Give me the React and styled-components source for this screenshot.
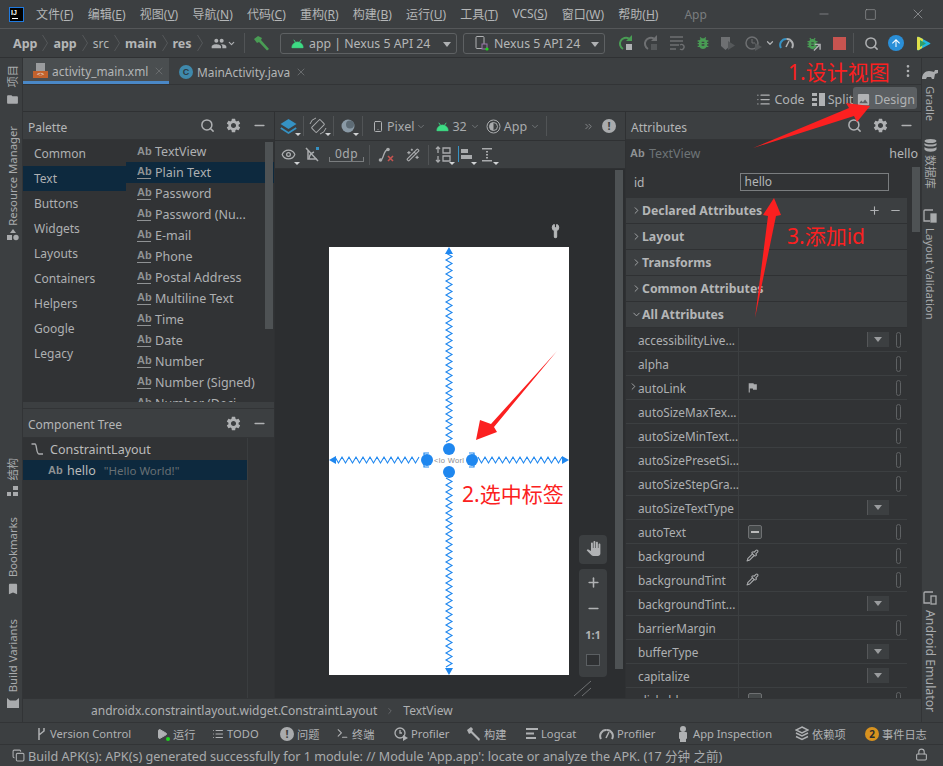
import React from "react";
import styled, { createGlobalStyle } from "styled-components";
import { Search, Plus, Minus, ChevronRight, ChevronDown, X, Wrench, Pipette, Lock, Eye, Square, MoreVertical, Smartphone, ChevronsRight, Wand2, List, Terminal, Play, Copy } from "lucide-react";
import { MdSettings, MdBugReport, MdPanTool, MdFlag, MdBookmark, MdFolder, MdArrowUpward, MdImage, MdPeople } from "react-icons/md";

const Global = createGlobalStyle`
  html, body { margin: 0; padding: 0; background: #3c3f41; }
  * { box-sizing: border-box; }
  body { font-family: "Noto Sans", "Noto Sans CJK SC", sans-serif; font-size: 12px; color: #bbbbbb; }
`;

const Window = styled.div`position: relative; width: 943px; height: 766px; overflow: hidden; display: flex; flex-direction: column; background: #3c3f41;`;

/* title bar */
const TitleBar = styled.header`height: 29px; flex: none; display: flex; align-items: center; padding-left: 9px; border-bottom: 1px solid #555759;`;
const Logo = styled.div`width: 15px; height: 15px; background: #000; border: 1px solid #1f7ae0; color: #fff; font: 700 7px/9px "Liberation Sans", sans-serif; padding-left: 1px; margin-right: 12px; position: relative;
  &::after { content: ""; position: absolute; left: 2px; bottom: 2px; width: 6px; height: 1px; background: #fff; }`;
const MenuBar = styled.nav`display: flex; gap: 14.2px; font-size: 12px; color: #b4b6b7; white-space: nowrap;`;
const Mnemonic = styled.span`text-decoration: underline; text-underline-offset: 1px;`;
const WindowTitle = styled.span`margin-left: 26px; color: #7a7d7f; font-size: 12px;`;
const WinControls = styled.div`margin-left: auto; display: flex; align-items: center; gap: 33px; padding-right: 17px; color: #a9abad;`;

/* main toolbar */
const ToolBar = styled.div`height: 29px; flex: none; display: flex; align-items: center; padding-left: 13px; border-bottom: 1px solid #2f3133;`;
const Crumbs = styled.div`width: 198px; flex: none; display: flex; align-items: center; gap: 5px; white-space: nowrap;`;
const Crumb = styled.span`font-weight: ${p => (p.$b ? 700 : 400)}; font-size: ${p => (p.$b ? 12.5 : 12)}px; color: #b4b6b7;`;
const CrumbSep = styled.svg`width: 6px; height: 18px; flex: none;`;
const ToolIcon = styled.span`display: inline-flex; position: relative; align-items: center; justify-content: center; flex: none; margin-left: ${p => p.$ml || 0}px; width: ${p => p.$w || 16}px; height: 18px; color: ${p => p.$c || "#afb1b3"};
  ${p => (p.$caret ? `&::after { content: ""; position: absolute; right: -4px; bottom: -1px; border-left: 3px solid transparent; border-right: 3px solid transparent; border-top: 3px solid #d0d2d4; }` : "")}`;
const VDivider = styled.span`flex: none; width: 1px; height: ${p => p.$h || 20}px; background: #515456; margin-left: ${p => p.$ml || 0}px;`;
const RunBox = styled.div`flex: none; display: flex; align-items: center; width: ${p => p.$w}px; height: 21px; margin-left: ${p => p.$ml}px; border: 1px solid #5e6163; border-radius: 3px; padding-left: ${p => p.$pl}px; gap: 5px; color: #b4b6b7; font-size: 12.3px; white-space: nowrap; position: relative;`;
const Caret = styled.span`position: absolute; right: ${p => p.$r}px; top: 8px; width: 0; height: 0; border-left: 4px solid transparent; border-right: 4px solid transparent; border-top: 5px solid #afb1b3;`;

/* body */
const Main = styled.div`flex: 1; min-height: 0; display: flex;`;
const Strip = styled.aside`flex: none; width: ${p => p.$w}px; display: flex; flex-direction: column; align-items: center; background: #3c3f41; ${p => (p.$left ? "border-right: 1px solid #323436; padding-left: 3px;" : "border-left: 1px solid #323436; padding-right: 5px;")}`;
const StripItem = styled.div`display: flex; flex-direction: column; align-items: center; gap: ${p => p.$gap || 5}px; margin-top: ${p => p.$mt || 0}px; color: #a9abad;`;
const StripSpacer = styled.div`flex: 1;`;
const StripLabel = styled.span`writing-mode: vertical-rl; text-orientation: sideways; font-size: ${p => p.$fs || 11.3}px; line-height: 14px; white-space: nowrap; ${p => (p.$left ? "transform: rotate(180deg);" : "")}`;
const Center = styled.div`flex: 1; min-width: 0; display: flex; flex-direction: column;`;

const TabRow = styled.div`height: 27px; flex: none; display: flex; align-items: stretch; border-bottom: 1px solid #323436; position: relative;`;
const Tab = styled.div`display: flex; align-items: center; width: ${p => p.$w}px; padding-left: 10px; padding-top: 2px; gap: 4px; font-size: 11.9px; color: #b4b6b7; white-space: nowrap; ${p => (p.$active ? "background: #4a4e50; border-bottom: 3px solid #4a88c7;" : "")}`;
const TabClose = styled.span`display: inline-flex; margin-left: ${p => p.$ml}px; color: #686b6d;`;
const TabMenu = styled.span`margin-left: auto; display: flex; align-items: center; padding-right: 5px; color: #afb1b3;`;
const FileIcon = styled.span`width: 15px; height: 16px; flex: none; position: relative; display: block;
  &::before { content: ""; position: absolute; left: 3px; top: 0; width: 9px; height: 8px; background: #9a9c9e; }
  &::after { content: "<>"; position: absolute; left: 0; top: 8px; width: 15px; height: 7px; background: #c1622d; color: #eee; font: 6px/7px "Liberation Sans", sans-serif; text-align: center; }`;
const ClassIcon = styled.span`width: 14px; height: 14px; flex: none; border-radius: 50%; background: #3f89ac; color: #2d3a42; font: 700 9px/14px "Liberation Sans", sans-serif; text-align: center;`;

const ViewBar = styled.div`height: 27px; flex: none; display: flex; align-items: center; justify-content: flex-end; padding-right: 4px; border-bottom: 1px solid #2f3133; font-size: 12.5px; color: #b0b2b4;`;
const ViewItem = styled.div`display: flex; align-items: center; gap: 3px; height: 22px; padding: 2px ${p => (p.$active ? 2 : 0)}px 0 3px; margin-left: ${p => p.$ml || 0}px; border-radius: 3px; ${p => (p.$active ? "background: #5b5f62;" : "")}`;

const Panels = styled.div`flex: 1; min-height: 0; display: flex;`;
const LeftColumn = styled.section`flex: none; width: 252px; display: flex; flex-direction: column; border-right: 1px solid #2f3133;`;
const PanelHeader = styled.div`height: ${p => p.$h || 28}px; flex: none; display: flex; align-items: center; padding-left: 5px; font-size: 12px; color: #b4b6b7; border-bottom: 1px solid #323436; background: #3c3f41;`;
const PanelTitle = styled.span`margin-top: 3px;`;
const HeaderIcons = styled.div`margin-left: auto; display: flex; align-items: center; gap: 10px; padding-right: ${p => p.$pr}px; color: #afb1b3;`;
const PaletteBody = styled.div`height: 262px; flex: none; display: flex; overflow: hidden; background: #313335; position: relative;`;
const Categories = styled.ul`width: 103px; flex: none; margin: 0; padding: 1px 0 0; list-style: none;`;
const Category = styled.li`height: 25px; line-height: 25px; padding-left: 11px; color: #aeb0b2; ${p => (p.$sel ? "background: #0d293e;" : "")}`;
const Widgets = styled.ul`flex: 1; margin: 0; padding: 1px 0 0; list-style: none;`;
const WidgetItem = styled.li`height: 21px; display: flex; align-items: center; gap: 4px; padding-left: 11px; white-space: nowrap; color: #aeb0b2; font-size: 12.5px; ${p => (p.$sel ? "background: #0d293e;" : "")}`;
const AbMark = styled.span`width: 14px; flex: none; font: 700 11px/11px "Liberation Sans", sans-serif; color: #8f9294; ${p => (p.$bar ? "border-bottom: 1px solid #8f9294; padding-bottom: 1px; margin-top: -1px;" : "")}`;
const ScrollThumb = styled.div`position: absolute; top: ${p => p.$t}px; left: ${p => p.$l}px; width: 8px; height: ${p => p.$h}px; background: #4e5254;`;
const PaletteGap = styled.div`height: 7px; flex: none; background: #3c3f41; border-bottom: 1px solid #323436;`;
const TreeBody = styled.div`flex: 1; display: flex; background: #313335;`;
const TreeList = styled.div`width: 225px; flex: none; padding-top: 1px; border-right: 1px solid #3a3d3f;`;
const TreeRow = styled.div`height: ${p => p.$h}px; display: flex; align-items: center; gap: 5px; padding-left: ${p => p.$pl}px; white-space: nowrap; font-size: 12.5px; ${p => (p.$sel ? "background: #0d293e;" : "")}`;
const TreeHint = styled.span`color: #687074; margin-left: 3px; font-size: 11.5px;`;

/* design surface */
const DesignColumn = styled.section`flex: none; width: 350px; display: flex; flex-direction: column; background: #2c2e30;`;
const DesignBar = styled.div`height: ${p => p.$h}px; flex: none; display: flex; align-items: center; padding-left: 5px; background: #3c3f41; border-bottom: 1px solid #2f3133; color: #a9abad; font-size: 12.5px;`;
const DpBox = styled.span`margin-left: 9px; width: 35px; height: 15px; text-align: center; font-size: 12px; line-height: 13px; letter-spacing: .5px; border-bottom: 1px solid #7a7d7f; position: relative;
  &::before, &::after { content: ""; position: absolute; bottom: 0; width: 1px; height: 4px; background: #7a7d7f; }
  &::before { left: 0; } &::after { right: 0; }`;
const BarText = styled.span`margin-left: ${p => p.$ml || 0}px; white-space: nowrap;`;
const Canvas = styled.div`flex: 1; min-height: 0; position: relative; padding: 78px 0 0 54px; overflow: hidden;`;
const Phone = styled.div`width: 240px; height: 428px; background: #fff; position: relative;`;
const PhoneArt = styled.svg`display: block; width: 240px; height: 428px;`;
const CanvasWrench = styled.span`position: absolute; left: 274px; top: 55px; color: #b4b6b7; display: flex; transform: rotate(-45deg);`;
const FloatBox = styled.div`position: absolute; left: 304px; top: ${p => p.$t}px; width: 28px; height: ${p => p.$h}px; background: #3c3f41; border-radius: 4px; display: flex; flex-direction: column; align-items: center; color: #b0b2b4; font-weight: 700; font-size: 11px;`;
const FloatCell = styled.span`height: 26px; flex: none; display: flex; align-items: center; justify-content: center;`;
const FitIcon = styled.span`width: 14px; height: 12px; background: #2f3133; border: 1px solid #5b5f62;`;
const ResizeHatch = styled.svg`position: absolute; left: 298px; top: 511px; width: 19px; height: 17px;`;

/* attributes */
const AttrColumn = styled.section`flex: none; width: 296px; display: flex; flex-direction: column; border-left: 1px solid #2f3133;`;
const AttrBody = styled.div`flex: 1; min-height: 0; overflow: hidden; position: relative; background: #313335;`;
const ClassRow = styled.div`height: 27px; display: flex; align-items: center; padding: 0 3px 0 4px; gap: 5px; color: #6e7477; font-size: 12.5px;`;
const ClassId = styled.span`margin-left: auto; color: #b4b6b7;`;
const AttrList = styled.div`width: 281px;`;
const IdRow = styled.div`height: 31px; display: flex; align-items: center; padding-left: 8px; color: #b4b6b7;`;
const IdInput = styled.div`margin-left: 96px; margin-top: -2px; width: 149px; height: 18px; border: 1px solid #7a7d7f; padding-left: 3px; line-height: 15px; color: #b4b6b7;`;
const SectionRow = styled.div`height: 26px; display: flex; align-items: center; padding-left: 5px; background: #3c3f41; border-bottom: 1px solid #2f3133; font-weight: 700; font-size: 12.3px; color: #b4b6b7;`;
const SectionChevron = styled.span`display: flex; width: 11px; color: #a9abad;`;
const SectionTools = styled.span`margin-left: auto; display: flex; gap: 8px; padding-right: 5px; color: #afb1b3;`;
const AttrRow = styled.div`height: 24px; display: flex; align-items: center; border-bottom: 1px solid #3c3f41; position: relative; font-size: 11.8px;`;
const AttrName = styled.div`width: 113px; flex: none; height: 100%; display: flex; align-items: center; padding-left: 12px; border-right: 1px solid #3c3f41; color: #aeb0b2; white-space: nowrap;`;
const RowChevron = styled.span`position: absolute; left: 2px; top: 5px; display: flex; color: #a9abad;`;
const AttrValue = styled.div`flex: 1; height: 100%; display: flex; align-items: center; padding-left: 7px; color: #a9abad;`;
const DropBtn = styled.span`position: absolute; left: 241px; top: 4px; width: 22px; height: 15px; background: #3c3f41; border-left: 1px solid #555759;
  &::after { content: ""; position: absolute; left: 6px; top: 5px; border-left: 4px solid transparent; border-right: 4px solid transparent; border-top: 5px solid #9a9c9e; }`;
const Pill = styled.span`position: absolute; left: 270px; top: 4px; width: 5px; height: 16px; border: 1px solid #5e6163; border-radius: 3px;`;
const CheckBox = styled.span`width: 14px; height: 14px; margin-left: 2px; border: 1px solid #6e7072; border-radius: 2px; background: #45494a; position: relative;
  &::after { content: ""; position: absolute; left: 2px; top: 5px; width: 8px; height: 2px; background: #bbb; }`;

const BreadcrumbBar = styled.div`height: 24px; flex: none; display: flex; align-items: center; padding-left: 68px; gap: 8px; background: #3c3f41; border-top: 1px solid #323436; font-size: 12px; color: #aeb0b2; white-space: nowrap;`;

/* bottom */
const ToolWindowBar = styled.div`height: 23px; flex: none; display: flex; align-items: center; padding-left: 36px; border-top: 1px solid #323436; border-bottom: 1px solid #323436; font-size: 11.2px; color: #b0b2b4; white-space: nowrap;`;
const ToolTab = styled.span`display: flex; align-items: center; gap: 3px; flex: none; width: ${p => p.$w}px;`;
const Badge = styled.span`width: 14px; height: 14px; border-radius: 50%; background: #d7921f; color: #2b2b2b; font-weight: 700; font-size: 10px; line-height: 14px; text-align: center;`;
const StatusBar = styled.footer`height: 21px; flex: none; display: flex; align-items: center; padding-left: 12px; gap: 3px; font-size: 12.6px; color: #a9abad; white-space: nowrap; position: relative;`;
const StatusLock = styled.span`position: absolute; right: 15px; top: 3px; display: flex; color: #afb1b3;`;

/* annotations */
const Overlay = styled.svg`position: absolute; left: 0; top: 0; width: 943px; height: 766px; pointer-events: none;`;
const Note = styled.span`position: absolute; left: ${p => p.$x}px; top: ${p => p.$y}px; color: #fb2020; font-size: 21px; line-height: 26px; white-space: nowrap; pointer-events: none;`;

/* drawn icons */
const Android = ({ s = 14 }) => (
  <svg width={s} height={s} viewBox="0 0 14 14"><path d="M1 11.500a6 6 0 0 1 12 0zM3 3l1.800 2.600M11 3 9.200 5.600" fill="#3ddc84" stroke="#3ddc84" strokeWidth="1" /></svg>
);
const ChevSep = () => (
  <CrumbSep viewBox="0 0 6 18"><path d="M.5 1 5.500 9 .5 17" fill="none" stroke="#55585a" /></CrumbSep>
);
const Hammer = () => (
  <svg width="18" height="16" viewBox="0 0 18 16"><path d="M1 4 5 1l4 2-1 2 8 9-2 1.500L6 7 4 8z" fill="#499c54" /></svg>
);
const DeviceIcon = () => (
  <svg width="14" height="16" viewBox="0 0 14 16"><rect x="1" y="1.500" width="8" height="12" rx="1" fill="none" stroke="#afb1b3" /><rect x="7" y="9" width="5" height="5" fill="#3c3f41" stroke="#9876aa" /><circle cx="12" cy="14" r="1.600" fill="#1ed41e" /></svg>
);
const Rerun = ({ c = "#499c54", d = "#afb1b3" }) => (
  <svg width="16" height="16" viewBox="0 0 16 16"><path d="M12 3.500A6 6 0 1 0 6 14" fill="none" stroke={c} strokeWidth="2" /><path d="M9 6h6V0z" fill={c} /><rect x="9" y="9" width="6" height="6" fill={d} /></svg>
);
const ApplyList = () => (
  <svg width="16" height="16" viewBox="0 0 16 16" stroke="#6e7072" strokeWidth="1.400" fill="none"><path d="M1 2h13M1 6h13M1 10h9M1 14h6M11 14a2.500 2.500 0 1 0 0-4" /></svg>
);
const ShieldRun = () => (
  <svg width="16" height="16" viewBox="0 0 16 16"><path d="M1 2h9v9l-4.500 4L1 11z" fill="#6e7072" /><path d="M8 6l7 4.500L8 15z" fill="#55585a" /></svg>
);
const ClockRun = () => (
  <svg width="18" height="16" viewBox="0 0 18 16"><circle cx="7" cy="8" r="6" fill="none" stroke="#6e7072" strokeWidth="1.500" /><path d="M7 4v4h3" fill="none" stroke="#6e7072" /><path d="M10 8l7 4-7 4z" fill="#55585a" /></svg>
);
const Gauge = ({ c1 = "#3592c4", c2 = "#afb1b3" }) => (
  <svg width="15" height="14" viewBox="0 0 15 14" fill="none" strokeWidth="2"><path d="M2 12A6 6 0 0 1 7.500 3" stroke={c1} /><path d="M7.500 3A6 6 0 0 1 13 12" stroke={c2} /><path d="M7 11l3-6" stroke={c2} strokeWidth="1.500" /></svg>
);
const BugAttach = () => (
  <>
    <MdBugReport size={17} color="#499c54" />
    <svg width="9" height="9" viewBox="0 0 9 9" style={{ marginLeft: -7, marginTop: 8 }}><path d="M1 8l6-6M2 1h6v6" stroke="#afb1b3" strokeWidth="1.600" fill="none" /></svg>
  </>
);
const UploadDisc = styled.span`display: inline-flex; width: 16px; height: 16px; border-radius: 50%; background: #2a8fd8; align-items: center; justify-content: center; color: #fff;`;
const StudioLogo = () => (
  <svg width="15" height="17" viewBox="0 0 15 17"><path d="M1 3q0-2 2-1l11 6q1 .5 0 1L3 15q-2 1-2-1z" fill="#22b8e0" /><path d="M1 3q0-2 2-1l4 2-1 9-3 2q-2 1-2-1z" fill="#dfe04a" /><path d="M4 5l6 3.500L4 12z" fill="#2f9e6a" /></svg>
);
const LayersIcon = () => (
  <svg width="17" height="17" viewBox="0 0 17 17"><path d="M8.500 1l8 5-8 5-8-5z" fill="#3592c4" /><path d="M.8 10l7.700 5 7.700-5" fill="none" stroke="#3592c4" strokeWidth="1.800" /></svg>
);
const RotateIcon = () => (
  <svg width="18" height="18" viewBox="0 0 18 18" fill="none" stroke="#a9abad"><rect x="5.500" y="3" width="7" height="12" rx="1" transform="rotate(45 9 9)" /><path d="M1 7A8.500 8.500 0 0 1 7 1M17 11A8.500 8.500 0 0 1 11 17" /></svg>
);
const ThemeBall = () => (
  <svg width="14" height="14" viewBox="0 0 14 14"><circle cx="7" cy="7" r="6.500" fill="#8a9aa6" /><circle cx="9" cy="5.500" r="4" fill="#5d6b75" /></svg>
);
const HalfCircle = () => (
  <svg width="15" height="15" viewBox="0 0 15 15"><circle cx="7.500" cy="7.500" r="6.500" fill="none" stroke="#a9abad" /><path d="M7.500 3.500a4 4 0 0 0 0 8z" fill="#a9abad" /><circle cx="7.500" cy="7.500" r="4" fill="none" stroke="#a9abad" /></svg>
);
const AlertDot = styled.span`display: inline-flex; width: 14px; height: 14px; border-radius: 50%; background: #a9abad; color: #3c3f41; font-weight: 700; font-size: 11px; line-height: 14px; justify-content: center;`;
const NoAuto = () => (
  <svg width="15" height="15" viewBox="0 0 15 15" fill="none" stroke="#a9abad" strokeWidth="1.500"><path d="M1 1l12 13M3 3v9h9" /><path d="M4 12A8 8 0 0 1 9 5" /><rect x="11" y="0" width="3" height="3" fill="#3592c4" stroke="none" /></svg>
);
const ClearPath = () => (
  <svg width="17" height="16" viewBox="0 0 17 16" fill="none"><circle cx="2.500" cy="13" r="1.800" fill="#a9abad" /><circle cx="10" cy="2.500" r="1.800" fill="#a9abad" /><path d="M2.500 13C6 13 5 3 10 2.500" stroke="#a9abad" strokeWidth="1.300" /><path d="M10 9l5 5M15 9l-5 5" stroke="#c75450" strokeWidth="1.600" /></svg>
);
const PackIcon = () => (
  <svg width="16" height="17" viewBox="0 0 16 17" fill="none" stroke="#a9abad" strokeWidth="1.300"><path d="M8 2h7v5H8zM8 10h7v5H8z" /><path d="M3 1v6M1 3l2-2 2 2M3 16v-6M1 14l2 2 2-2" /></svg>
);
const AlignIcon = () => (
  <svg width="15" height="17" viewBox="0 0 15 17"><rect x="0" y="0" width="1" height="16" fill="#3592c4" /><rect x="3" y="3" width="7" height="4" fill="#a9abad" /><rect x="3" y="9" width="11" height="4" fill="#a9abad" /></svg>
);
const GuideIcon = () => (
  <svg width="14" height="16" viewBox="0 0 14 16" fill="#a9abad"><rect x="1" y="1" width="10" height="1.500" /><rect x="1" y="13" width="10" height="1.500" /><rect x="5" y="4" width="2" height="1.500" /><rect x="5" y="7" width="2" height="1.500" /><rect x="5" y="10" width="2" height="1.500" /></svg>
);
const Tree = () => (
  <svg width="15" height="15" viewBox="0 0 15 15" fill="none" stroke="#a9abad" strokeWidth="1.400"><path d="M1.500 2H5c2 0 1 10 4 10h4" /></svg>
);
const Shapes = () => (
  <svg width="12" height="12" viewBox="0 0 12 12" fill="#a9abad"><path d="M6 0l3 4H3z" /><rect x="0" y="6" width="5" height="5" /><circle cx="9" cy="8.500" r="2.700" /></svg>
);
const StructIcon = () => (
  <svg width="12" height="10" viewBox="0 0 12 10" fill="#a9abad"><rect x="6" y="0" width="5" height="4" /><rect x="0" y="6" width="4" height="4" /><rect x="6" y="6" width="5" height="4" /></svg>
);
const AndroidGray = () => (
  <svg width="12" height="10" viewBox="0 0 12 10" fill="#a9abad"><path d="M0 0l3 2.500h6L12 0v10H0z" /></svg>
);
const Turtle = () => (
  <svg width="16" height="12" viewBox="0 0 16 12" fill="#a9abad"><path d="M0 11c0-5 3-8 7-8 3 0 4 1 5 1l1-2h3v3l-3 1-1 5h-2l-1-2H5l-1 2z" /></svg>
);
const Db = () => (
  <svg width="13" height="13" viewBox="0 0 13 13" fill="#a9abad"><ellipse cx="6.500" cy="2" rx="6" ry="2" /><path d="M.5 4c2 2 10 2 12 0v2c-2 2-10 2-12 0zM.5 8c2 2 10 2 12 0v2.500c-2 3-10 3-12 0z" /></svg>
);
const LayoutVal = ({ small }) => (
  <svg width="14" height="15" viewBox="0 0 14 15" fill="none" stroke="#a9abad" strokeWidth="1.300"><path d="M10 1H2a1 1 0 0 0-1 1v10h6" /><rect x="8" y="5" width="5" height="8" fill={small ? "none" : "#a9abad"} /></svg>
);
const BuildBranch = () => (
  <svg width="11" height="14" viewBox="0 0 11 14" fill="none" stroke="#afb1b3" strokeWidth="1.500"><path d="M3 1v12M8 1v3L3 8" /></svg>
);
const ProfilerIcon = () => (
  <svg width="14" height="15" viewBox="0 0 14 15" fill="none" stroke="#afb1b3" strokeWidth="1.300"><circle cx="6" cy="7" r="5" /><path d="M6 4v3h2" /><path d="M9 9l5 3-5 3z" fill="#afb1b3" stroke="none" /></svg>
);
const HammerGray = () => (
  <svg width="14" height="14" viewBox="0 0 14 14"><path d="M0 3l4-3 2 2-1 2 8 8-1 2-8-8-2 1z" fill="#afb1b3" /></svg>
);
const Logcat = () => (
  <svg width="12" height="11" viewBox="0 0 12 11" fill="#afb1b3"><rect width="12" height="2" /><rect y="4.500" width="8" height="2" /><rect y="9" width="10" height="2" /></svg>
);
const Inspector = () => (
  <svg width="14" height="16" viewBox="0 0 14 16" fill="#afb1b3"><circle cx="7" cy="3" r="3" /><rect x="3" y="6" width="8" height="7" rx="1" /><rect x="4" y="13" width="6" height="3" /></svg>
);
const DepsIcon = () => (
  <svg width="14" height="15" viewBox="0 0 14 15" fill="none" stroke="#afb1b3" strokeWidth="1.400"><path d="M7 1l6 3-6 3-6-3zM1 7l6 3 6-3M1 10.500l6 3 6-3" /></svg>
);
const GreenDot = styled.span`width: 4px; height: 4px; margin: 10px 0 0 -5px; border-radius: 50%; background: #1ed41e;`;
const RunMini = () => (<><Play size={12} fill="#afb1b3" stroke="#afb1b3" /><GreenDot /></>);

/* constraint springs */
const zigV = (x, y0, y1) => {
  const pts = []; const dir = y1 > y0 ? 1 : -1; let y = y0; let s = -1;
  while ((y1 - y) * dir > 0) { pts.push(`${x + s * 3},${y}`); y += dir * 3.5; s = -s; }
  return pts.join(" ");
};
const zigH = (y, x0, x1) => {
  const pts = []; const dir = x1 > x0 ? 1 : -1; let x = x0; let s = -1;
  while ((x1 - x) * dir > 0) { pts.push(`${x},${y + s * 3}`); x += dir * 3.5; s = -s; }
  return pts.join(" ");
};

const BLUE = "#1f87ef";
const PhoneDrawing = () => (
  <PhoneArt viewBox="0 0 240 428">
    <g fill="none" stroke={BLUE} strokeWidth="1.100">
      <polyline points={zigV(120, 6, 196)} />
      <polyline points={zigV(120, 231, 422)} />
      <polyline points={zigH(213, 6, 92)} />
      <polyline points={zigH(213, 149, 234)} />
      <path d="M95 208v-2h5M145 208v-2h-5M95 218v2h5M145 218v2h-5" strokeWidth="1.200" />
    </g>
    <path d="M120 0l4 7h-8zM120 428l4-7h-8zM0 213l7-4v8zM240 213l-7-4v8z" fill={BLUE} />
    <text x="120" y="216" textAnchor="middle" fontSize="7.500" fontFamily="Liberation Sans, sans-serif" fill="#8b8b8b" textLength="30">&lt;lo Worl</text>
    <g fill={BLUE}>
      <circle cx="120" cy="202" r="6" /><circle cx="120" cy="225" r="6" />
      <circle cx="98" cy="213" r="6" /><circle cx="143" cy="213" r="6" />
    </g>
  </PhoneArt>
);

const MENU = [["文件", "F"], ["编辑", "E"], ["视图", "V"], ["导航", "N"], ["代码", "C"], ["重构", "R"], ["构建", "B"], ["运行", "U"], ["工具", "T"], ["VCS", "S"], ["窗口", "W"], ["帮助", "H"]];
const CATS = ["Common", "Text", "Buttons", "Widgets", "Layouts", "Containers", "Helpers", "Google", "Legacy"];
const WIDGETS = ["TextView", "Plain Text", "Password", "Password (Nu...", "E-mail", "Phone", "Postal Address", "Multiline Text", "Time", "Date", "Number", "Number (Signed)", "Number (Deci..."];
const ROWS = [
  ["accessibilityLive...", "drop", true], ["alpha", null, true], ["autoLink", "flag", true], ["autoSizeMaxTex...", null, true],
  ["autoSizeMinText...", null, true], ["autoSizePresetSi...", null, true], ["autoSizeStepGra...", null, true], ["autoSizeTextType", "drop", false],
  ["autoText", "check", true], ["background", "pick", true], ["backgroundTint", "pick", true], ["backgroundTint...", "drop", false],
  ["barrierMargin", null, true], ["bufferType", "drop", false], ["capitalize", "drop", false], ["clickable", "check", true],
];
const SECTIONS = ["Declared Attributes", "Layout", "Transforms", "Common Attributes", "All Attributes"];

const Gear = () => <MdSettings size={17} />;

export default function App() {
  return (
    <Window>
      <Global />
      <TitleBar>
        <Logo>IJ</Logo>
        <MenuBar>
          {MENU.map(([t, k]) => <span key={k}>{t}(<Mnemonic>{k}</Mnemonic>)</span>)}
        </MenuBar>
        <WindowTitle>App</WindowTitle>
        <WinControls>
          <Minus size={14} strokeWidth={1} />
          <Square size={13} strokeWidth={1} />
          <X size={16} strokeWidth={1} />
        </WinControls>
      </TitleBar>

      <ToolBar>
        <Crumbs>
          <Crumb $b>App</Crumb><ChevSep /><Crumb $b>app</Crumb><ChevSep /><Crumb>src</Crumb><ChevSep /><Crumb $b>main</Crumb><ChevSep /><Crumb $b>res</Crumb><ChevSep />
        </Crumbs>
        <ToolIcon $w={16}><MdPeople size={17} /></ToolIcon>
        <ToolIcon $w={9}><ChevronDown size={9} strokeWidth={3} /></ToolIcon>
        <VDivider $ml={8} />
        <ToolIcon $w={18} $ml={8}><Hammer /></ToolIcon>
        <RunBox $w={177} $ml={9} $pl={10}><Android s={13} /><span>app | Nexus 5 API 24</span><Caret $r={5} /></RunBox>
        <RunBox $w={142} $ml={6} $pl={11}><DeviceIcon /><span>Nexus 5 API 24</span><Caret $r={5} /></RunBox>
        <ToolIcon $ml={12}><Rerun /></ToolIcon>
        <ToolIcon $ml={9}><Rerun c="#6e7072" d="#55585a" /></ToolIcon>
        <ToolIcon $ml={11}><ApplyList /></ToolIcon>
        <ToolIcon $ml={10} $c="#499c54"><MdBugReport size={18} /></ToolIcon>
        <ToolIcon $ml={9}><ShieldRun /></ToolIcon>
        <ToolIcon $ml={9} $w={18}><ClockRun /></ToolIcon>
        <ToolIcon $ml={2} $w={10}><ChevronDown size={10} strokeWidth={3} /></ToolIcon>
        <ToolIcon $ml={3}><Gauge /></ToolIcon>
        <ToolIcon $ml={11}><BugAttach /></ToolIcon>
        <ToolIcon $ml={11} $w={14}><svg width="13" height="13"><rect width="13" height="13" fill="#c75450" /></svg></ToolIcon>
        <VDivider $ml={7} />
        <ToolIcon $ml={9}><Search size={15} strokeWidth={2.4} /></ToolIcon>
        <ToolIcon $ml={9}><UploadDisc><MdArrowUpward size={12} /></UploadDisc></ToolIcon>
        <ToolIcon $ml={11}><StudioLogo /></ToolIcon>
      </ToolBar>

      <Main>
        <Strip $w={23} $left>
          <StripItem $mt={7}><StripLabel $left>项目</StripLabel><MdFolder size={13} /></StripItem>
          <StripItem $mt={20} $gap={4}><StripLabel $left>Resource Manager</StripLabel><Shapes /></StripItem>
          <StripSpacer />
          <StripItem><StripLabel $left>结构</StripLabel><StructIcon /></StripItem>
          <StripItem $mt={21}><StripLabel $left>Bookmarks</StripLabel><MdBookmark size={14} /></StripItem>
          <StripItem $mt={23} $gap={6}><StripLabel $left>Build Variants</StripLabel><AndroidGray /></StripItem>
          <StripItem $mt={14} />
        </Strip>

        <Center>
          <TabRow>
            <Tab $w={146} $active><FileIcon /><span>activity_main.xml</span><TabClose $ml={1}><X size={12} /></TabClose></Tab>
            <Tab $w={145}><ClassIcon>C</ClassIcon><span>MainActivity.java</span><TabClose $ml={1}><X size={12} /></TabClose></Tab>
            <TabMenu><MoreVertical size={16} /></TabMenu>
          </TabRow>
          <ViewBar>
            <ViewItem><List size={15} /><span>Code</span></ViewItem>
            <ViewItem $ml={4}><svg width="13" height="13" fill="#b0b2b4"><rect width="5" height="3" /><rect y="5" width="5" height="3" /><rect y="10" width="5" height="3" /><rect x="7" width="6" height="13" /></svg><span>Split</span></ViewItem>
            <ViewItem $active><MdImage size={15} /><span>Design</span></ViewItem>
          </ViewBar>

          <Panels>
            <LeftColumn>
              <PanelHeader>
                <PanelTitle>Palette</PanelTitle>
                <HeaderIcons $pr={7}><Search size={15} strokeWidth={2.4} /><Gear /><Minus size={15} strokeWidth={2.4} /></HeaderIcons>
              </PanelHeader>
              <PaletteBody>
                <Categories>
                  {CATS.map(c => <Category key={c} $sel={c === "Text"}>{c}</Category>)}
                </Categories>
                <Widgets>
                  {WIDGETS.map((w, i) => (
                    <WidgetItem key={w} $sel={i === 1}><AbMark $bar={i > 0}>Ab</AbMark>{w}</WidgetItem>
                  ))}
                </Widgets>
                <ScrollThumb $t={2} $l={242} $h={187} />
              </PaletteBody>
              <PaletteGap />
              <PanelHeader $h={29}>
                <PanelTitle>Component Tree</PanelTitle>
                <HeaderIcons $pr={7}><Gear /><Minus size={15} strokeWidth={2.4} /></HeaderIcons>
              </PanelHeader>
              <TreeBody>
                <TreeList>
                  <TreeRow $h={21} $pl={7}><Tree /><span>ConstraintLayout</span></TreeRow>
                  <TreeRow $h={20} $pl={25} $sel><AbMark>Ab</AbMark><span>hello</span><TreeHint>"Hello World!"</TreeHint></TreeRow>
                </TreeList>
              </TreeBody>
            </LeftColumn>

            <DesignColumn>
              <DesignBar $h={29}>
                <ToolIcon $w={17} $caret><LayersIcon /></ToolIcon>
                <VDivider $ml={6} />
                <ToolIcon $ml={5} $w={18} $caret><RotateIcon /></ToolIcon>
                <VDivider $ml={6} />
                <ToolIcon $ml={7} $w={14} $caret><ThemeBall /></ToolIcon>
                <VDivider $ml={7} />
                <ToolIcon $ml={9} $w={12}><Smartphone size={15} /></ToolIcon>
                <BarText $ml={3}>Pixel</BarText>
                <ToolIcon $ml={2} $w={10} $c="#7a7d7f"><ChevronDown size={11} /></ToolIcon>
                <ToolIcon $ml={9} $w={14}><Android s={13} /></ToolIcon>
                <BarText $ml={3}>32</BarText>
                <ToolIcon $ml={3} $w={10} $c="#7a7d7f"><ChevronDown size={11} /></ToolIcon>
                <ToolIcon $ml={6} $w={15}><HalfCircle /></ToolIcon>
                <BarText $ml={3}>App</BarText>
                <ToolIcon $ml={3} $w={10} $c="#7a7d7f"><ChevronDown size={11} /></ToolIcon>
                <VDivider $ml={6} />
                <ToolIcon $ml={35} $w={12} $c="#8a8c8e"><ChevronsRight size={11} /></ToolIcon>
                <ToolIcon $ml={7}><AlertDot>!</AlertDot></ToolIcon>
              </DesignBar>
              <DesignBar $h={28}>
                <ToolIcon $caret><Eye size={15} strokeWidth={2} /></ToolIcon>
                <ToolIcon $ml={8}><NoAuto /></ToolIcon>
                <DpBox>0dp</DpBox>
                <VDivider $ml={5} />
                <ToolIcon $ml={8} $w={17}><ClearPath /></ToolIcon>
                <ToolIcon $ml={10} $c="#a9abad"><Wand2 size={14} /></ToolIcon>
                <VDivider $ml={7} />
                <ToolIcon $ml={6} $caret><PackIcon /></ToolIcon>
                <ToolIcon $ml={7} $w={15} $caret><AlignIcon /></ToolIcon>
                <ToolIcon $ml={8} $w={14} $caret><GuideIcon /></ToolIcon>
              </DesignBar>
              <Canvas>
                <CanvasWrench><Wrench size={13} fill="#b4b6b7" /></CanvasWrench>
                <Phone><PhoneDrawing /></Phone>
                <ScrollThumb $t={1} $l={340} $h={499} />
                <FloatBox $t={366} $h={29}><FloatCell><MdPanTool size={15} /></FloatCell></FloatBox>
                <FloatBox $t={400} $h={108}>
                  <FloatCell><Plus size={15} strokeWidth={2.500} /></FloatCell>
                  <FloatCell><Minus size={15} strokeWidth={2.500} /></FloatCell>
                  <FloatCell>1:1</FloatCell>
                  <FloatCell><FitIcon /></FloatCell>
                </FloatBox>
                <ResizeHatch viewBox="0 0 19 17"><path d="M1 16 18 1M9 16 18 8" stroke="#6e7072" fill="none" /></ResizeHatch>
              </Canvas>
            </DesignColumn>

            <AttrColumn>
              <PanelHeader>
                <PanelTitle>Attributes</PanelTitle>
                <HeaderIcons $pr={7}><Search size={15} strokeWidth={2.4} /><Gear /><Minus size={15} strokeWidth={2.4} /></HeaderIcons>
              </PanelHeader>
              <AttrBody>
                <ClassRow><AbMark>Ab</AbMark><span>TextView</span><ClassId>hello</ClassId></ClassRow>
                <AttrList>
                  <IdRow>id<IdInput>hello</IdInput></IdRow>
                  {SECTIONS.map((s, i) => (
                    <SectionRow key={s}>
                      <SectionChevron>{i === 4 ? <ChevronDown size={11} /> : <ChevronRight size={11} />}</SectionChevron>
                      {s}
                      {i === 0 && <SectionTools><Plus size={13} strokeWidth={2} /><Minus size={13} strokeWidth={2} /></SectionTools>}
                    </SectionRow>
                  ))}
                  {ROWS.map(([name, kind, pill]) => (
                    <AttrRow key={name}>
                      {name === "autoLink" && <RowChevron><ChevronRight size={11} /></RowChevron>}
                      <AttrName>{name}</AttrName>
                      <AttrValue>
                        {kind === "flag" && <MdFlag size={13} />}
                        {kind === "check" && <CheckBox />}
                        {kind === "pick" && <Pipette size={13} />}
                      </AttrValue>
                      {kind === "drop" && <DropBtn />}
                      {pill && <Pill />}
                    </AttrRow>
                  ))}
                </AttrList>
                <ScrollThumb $t={27} $l={286} $h={65} />
              </AttrBody>
            </AttrColumn>
          </Panels>

          <BreadcrumbBar>
            <span>androidx.constraintlayout.widget.ConstraintLayout</span>
            <ChevronRight size={10} color="#6e7072" />
            <span>TextView</span>
          </BreadcrumbBar>
        </Center>

        <Strip $w={22}>
          <StripItem $mt={10} $gap={6}><Turtle /><StripLabel>Gradle</StripLabel></StripItem>
          <StripItem $mt={18} $gap={3}><Db /><StripLabel>数据库</StripLabel></StripItem>
          <StripItem $mt={20} $gap={4}><LayoutVal /><StripLabel>Layout Validation</StripLabel></StripItem>
          <StripSpacer />
          <StripItem $gap={4}><LayoutVal small /><StripLabel $fs={12.3}>Android Emulator</StripLabel></StripItem>
          <StripItem $mt={10} />
        </Strip>
      </Main>

      <ToolWindowBar>
        <ToolTab $w={120}><BuildBranch /><span>Version Control</span></ToolTab>
        <ToolTab $w={56}><RunMini /><span>运行</span></ToolTab>
        <ToolTab $w={68}><List size={12} /><span>TODO</span></ToolTab>
        <ToolTab $w={56}><AlertDot>!</AlertDot><span>问题</span></ToolTab>
        <ToolTab $w={58}><Terminal size={13} /><span>终端</span></ToolTab>
        <ToolTab $w={73}><ProfilerIcon /><span>Profiler</span></ToolTab>
        <ToolTab $w={59}><HammerGray /><span>构建</span></ToolTab>
        <ToolTab $w={73}><Logcat /><span>Logcat</span></ToolTab>
        <ToolTab $w={77}><Gauge c1="#afb1b3" /><span>Profiler</span></ToolTab>
        <ToolTab $w={119}><Inspector /><span>App Inspection</span></ToolTab>
        <ToolTab $w={70}><DepsIcon /><span>依赖项</span></ToolTab>
        <ToolTab $w={70}><Badge>2</Badge><span>事件日志</span></ToolTab>
      </ToolWindowBar>
      <StatusBar>
        <Copy size={13} />
        <span>Build APK(s): APK(s) generated successfully for 1 module: // Module 'App.app': locate or analyze the APK. (17 分钟 之前)</span>
        <StatusLock><Lock size={13} /></StatusLock>
      </StatusBar>

      <Overlay viewBox="0 0 943 766">
        <g fill="#fb2020">
          <polygon points="753,148 849,108 846,103 870,106 857,122 854,116" />
          <polygon points="557,351 491,424 480,420 476,440 497,432 494,427" />
          <polygon points="755,318 768,216 763,215 774,198 781,215 776,216" />
        </g>
      </Overlay>
      <Note $x={788} $y={59}>1.设计视图</Note>
      <Note $x={462} $y={481}>2.选中标签</Note>
      <Note $x={787} $y={223}>3.添加id</Note>
    </Window>
  );
}
